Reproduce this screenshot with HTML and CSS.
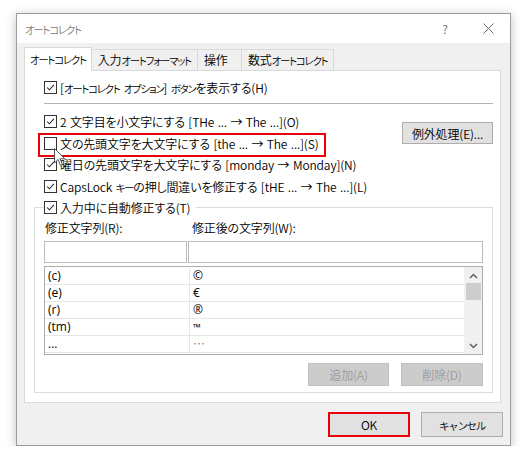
FILE: index.html
```html
<!DOCTYPE html>
<html lang="ja">
<head>
    <meta charset="UTF-8">
    <meta name="viewport" content="width=device-width, initial-scale=1.0">
    <title>オートコレクト</title>
    <link rel="stylesheet" href="styles.css">
</head>
<body>
    <div class="dialog">
        <!-- Title bar -->
        <div class="titlebar">
            <span class="title"><span class="kana">オートコレクト</span></span>
            <span class="help">?</span>
            <span class="close">
                <svg width="11" height="11" viewBox="0 0 11 11"><path d="M0.5 0.5 L10.5 10.5 M10.5 0.5 L0.5 10.5" stroke="#6f6f6f" stroke-width="1" fill="none"/></svg>
            </span>
        </div>

        <!-- Tabs -->
        <div class="tabs">
            <div class="tab active"><span class="kana">オートコレクト</span></div>
            <div class="tab">入力<span class="kana">オートフォーマット</span></div>
            <div class="tab">操作</div>
            <div class="tab">数式<span class="kana">オートコレクト</span></div>
        </div>

        <div class="panel">
            <div class="check first">
                <span class="box"><svg viewBox="0 0 13 13"><path d="M2.5 6.5 L5.2 9.2 L10.5 3.5"/></svg></span>
                <span>[<span class="kana">オートコレクト オプション</span>] <span class="kana">ボタン</span>を表示する(H)</span>
            </div>
            <div class="sep"></div>

            <div class="options">
                <div class="option-list">
                    <div class="check">
                        <span class="box"><svg viewBox="0 0 13 13"><path d="M2.5 6.5 L5.2 9.2 L10.5 3.5"/></svg></span>
                        2 文字目を小文字にする [THe ... → The ...](O)
                    </div>
                    <div class="check marked">
                        <span class="box"></span>
                        文の先頭文字を大文字にする [the ... → The ...](S)
                    </div>
                    <div class="check">
                        <span class="box"><svg viewBox="0 0 13 13"><path d="M2.5 6.5 L5.2 9.2 L10.5 3.5"/></svg></span>
                        曜日の先頭文字を大文字にする [monday → Monday](N)
                    </div>
                    <div class="check">
                        <span class="box"><svg viewBox="0 0 13 13"><path d="M2.5 6.5 L5.2 9.2 L10.5 3.5"/></svg></span>
                        <span>CapsLock <span class="kana">キー</span>の押し間違いを修正する [tHE ... → The ...](L)</span>
                    </div>
                </div>
                <button class="btn btn-exceptions">例外処理(E)...</button>
            </div>

            <!-- Replace-as-you-type group -->
            <fieldset class="group">
                <legend>
                    <span class="check">
                        <span class="box"><svg viewBox="0 0 13 13"><path d="M2.5 6.5 L5.2 9.2 L10.5 3.5"/></svg></span>
                        入力中に自動修正する(T)
                    </span>
                </legend>

                <div class="fields">
                    <span class="field-label">修正文字列(R):</span>
                    <span class="field-label second">修正後の文字列(W):</span>
                    <input class="field" type="text">
                    <input class="field" type="text">
                </div>

                <div class="list">
                    <div class="list-body">
                        <div class="list-row"><span>(c)</span><span>©</span></div>
                        <div class="list-row"><span>(e)</span><span>€</span></div>
                        <div class="list-row"><span>(r)</span><span>®</span></div>
                        <div class="list-row"><span>(tm)</span><span class="tm">™</span></div>
                        <div class="list-row"><span>...</span><span class="more">…</span></div>
                    </div>
                    <div class="scrollbar">
                        <svg class="arrow" width="9" height="6" viewBox="0 0 9 6"><path d="M1 5 L4.5 1.5 L8 5"/></svg>
                        <div class="thumb"></div>
                        <svg class="arrow down" width="9" height="6" viewBox="0 0 9 6"><path d="M1 1 L4.5 4.5 L8 1"/></svg>
                    </div>
                </div>

                <div class="group-buttons">
                    <button class="btn small" disabled>追加(A)</button>
                    <button class="btn small wide" disabled>削除(D)</button>
                </div>
            </fieldset>
        </div>

        <div class="footer">
            <button class="btn footer-btn ok">OK</button>
            <button class="btn footer-btn"><span class="kana">キャンセル</span></button>
        </div>
    </div>

    <!-- mouse pointer -->
    <svg class="cursor" width="12" height="19" viewBox="0 0 12 19">
        <path d="M0.5 0.5 L0.5 15 L4 11.5 L6.5 17.5 L8.5 16.6 L6 10.8 L10.8 10.8 Z" fill="#fff" stroke="#555" stroke-width="1"/>
    </svg>
</body>
</html>
```

FILE: styles.css
```css
body {
    margin: 0;
    background: #fff;
    font-family: "Noto Sans CJK JP", sans-serif;
    font-size: 12px;
    font-weight: 350;
    font-feature-settings: "palt";
    letter-spacing: -0.15px;
    word-spacing: 1px;
    color: #000;
}
/* katakana runs are set tighter than the rest */
.kana {
    font-size: 10.5px;
    letter-spacing: -1.3px;
    word-spacing: 3px;
}
.dialog {
    box-sizing: border-box;
    width: 495px;
    height: 433px;
    margin: 13px 0 0 16px;
    background: #f0f0f0;
    border: 1px solid #9c9c9c;
    box-shadow: 0 2px 10px rgba(0, 0, 0, 0.25);
}
.titlebar {
    display: flex;
    align-items: center;
    height: 29px;
    background: #fff;
    padding-left: 8px;
}
.title {
    flex: 1;
    color: #7a7a7a;
}
.help {
    width: 26px;
    text-align: center;
    color: #666;
    margin-right: 8px;
}
.close {
    width: 44px;
    display: flex;
    justify-content: center;
}
.tabs {
    position: relative;
    z-index: 1;
    display: flex;
    align-items: flex-end;
    height: 24px;
    margin: 4px 0 -1px 7px;
}
.tab {
    box-sizing: border-box;
    min-width: 45px;
    height: 21px;
    margin: 0 0 1px -1px;
    padding: 0 6px;
    border: 1px solid #d9d9d9;
    border-bottom: none;
    background: #f0f0f0;
    line-height: 19px;
}
.tab.active {
    height: 24px;
    margin: 0;
    padding: 0 5px;
    background: #fff;
    line-height: 22px;
}
.panel {
    box-sizing: border-box;
    height: 333px;
    margin: 0 9px 0 7px;
    background: #fff;
    border: 1px solid #d9d9d9;
    padding: 5px 7px 0 9px;
}
.check {
    display: flex;
    align-items: center;
    gap: 3px;
    height: 21.5px;
    padding-left: 10px;
    white-space: nowrap;
}
.check.first {
    height: 22px;
}
.check.marked {
    position: relative;
}
.check.marked::after {
    content: "";
    position: absolute;
    left: 4px;
    top: 0;
    width: 288px;
    height: 24px;
    box-sizing: border-box;
    border: 2px solid #e8000b;
}
.box {
    box-sizing: border-box;
    flex: none;
    width: 13px;
    height: 13px;
    border: 1px solid #333;
    background: #fff;
}
.box svg {
    display: block;
    width: 11px;
    height: 11px;
}
.box path {
    fill: none;
    stroke: #222;
    stroke-width: 1.2;
}
.sep {
    height: 1px;
    background: #b4b4b4;
    margin: 5px 0 7px 10px;
}
.options {
    display: flex;
    justify-content: space-between;
    align-items: flex-start;
}
.btn {
    box-sizing: border-box;
    font-family: inherit;
    font-size: 12px;
    font-weight: inherit;
    letter-spacing: inherit;
    color: #000;
    background: #e1e1e1;
    border: 1px solid #adadad;
    padding: 0;
    margin: 0;
}
.btn-exceptions {
    width: 91px;
    height: 22px;
    margin-top: 11px;
}
.group {
    margin: 0;
    padding: 0 9px 6px;
    border: 1px solid #dcdcdc;
    min-width: 0;
}
.group legend {
    padding: 0 6px 0 0;
}
.group legend .check {
    padding-left: 0;
}
.fields {
    display: grid;
    grid-template-columns: 143px 295px;
    column-gap: 1px;
    row-gap: 4px;
}
.field-label {
    line-height: 18px;
    padding-left: 1px;
}
.field-label.second {
    padding-left: 4px;
}
.field {
    box-sizing: border-box;
    height: 22px;
    margin: 0;
    padding: 0 3px;
    border: 1px solid #bcbcbc;
    font-family: inherit;
}
.list {
    display: flex;
    box-sizing: border-box;
    height: 89px;
    margin-top: 3px;
    border: 1px solid #adadad;
}
.list-body {
    flex: 1;
    padding-top: 1px;
    overflow: hidden;
}
.list-row {
    display: grid;
    grid-template-columns: 145px 1fr;
    box-sizing: border-box;
    height: 17px;
    border-bottom: 1px solid #e6e6e6;
    font-family: "Open Sans", sans-serif;
    font-size: 12px;
    font-weight: 400;
    letter-spacing: 0;
    line-height: 16px;
    color: #000;
}
.list-row span {
    padding-left: 3px;
}
.list-row span:first-child {
    border-right: 1px solid #e6e6e6;
}
.list-row .tm {
    font-size: 10px;
}
.list-row .more {
    font-family: "Noto Sans CJK JP", sans-serif;
    color: #888;
}
.scrollbar {
    display: flex;
    flex-direction: column;
    align-items: center;
    width: 18px;
    background: #f0f0f0;
}
.arrow {
    margin-top: 6px;
}
.arrow path {
    fill: none;
    stroke: #606060;
    stroke-width: 1.5;
}
.arrow.down {
    margin-top: auto;
    margin-bottom: 5px;
}
.thumb {
    width: 15px;
    height: 17px;
    margin-top: 4px;
    background: #cdcdcd;
}
.group-buttons {
    display: flex;
    justify-content: flex-end;
    gap: 12px;
    margin-top: 8px;
}
.btn.small {
    width: 81px;
    height: 23px;
}
.btn.small.wide {
    width: 82px;
}
.btn:disabled {
    background: #cccccc;
    border-color: #bfbfbf;
    color: #9a9a9a;
}
.footer {
    display: flex;
    justify-content: flex-end;
    gap: 11px;
    padding: 9px 7px 0 0;
}
.footer-btn {
    width: 82px;
    height: 25px;
}
.footer-btn.ok {
    border: 2px solid #e8000b;
}
.cursor {
    position: absolute;
    left: 54px;
    top: 148px;
}
```
